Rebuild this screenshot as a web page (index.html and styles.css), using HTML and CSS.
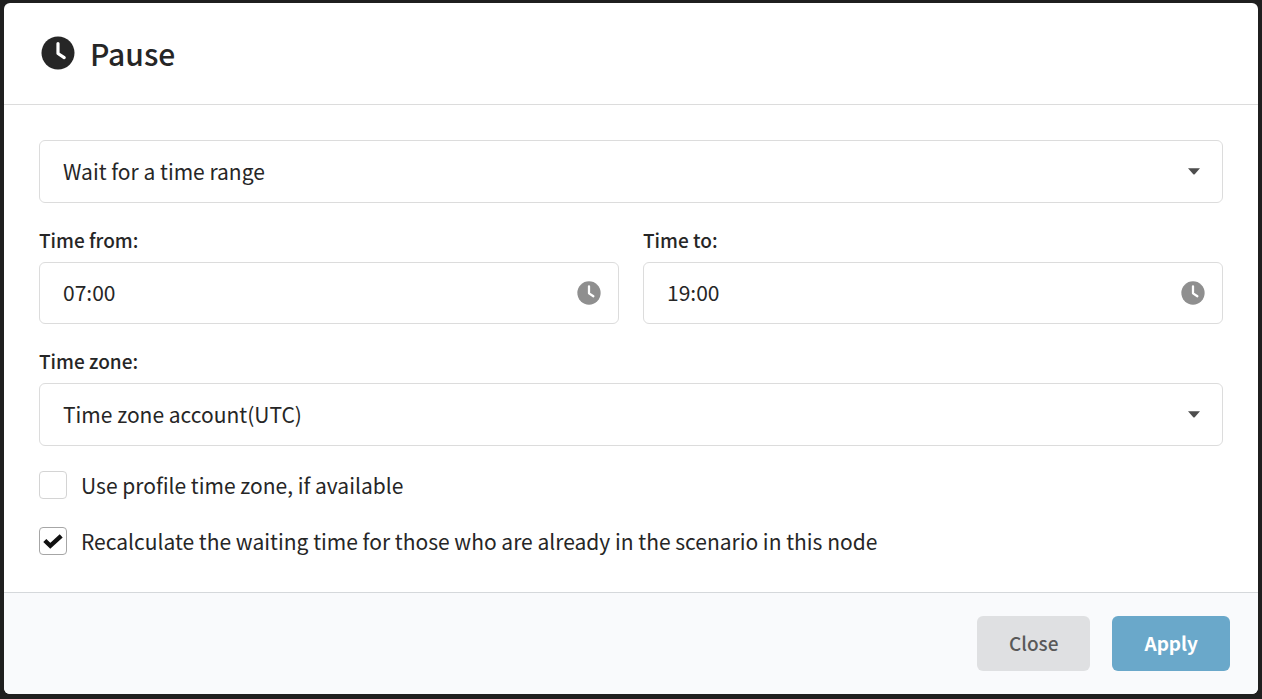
FILE: index.html
```html
<!DOCTYPE html>
<html lang="en">
<head>
<meta charset="utf-8">
<meta name="viewport" content="width=device-width, initial-scale=1">
<title>Pause</title>
<link rel="stylesheet" href="styles.css">
</head>
<body>
<svg class="sprite" aria-hidden="true">
  <symbol id="clock" viewBox="0 0 34 34">
    <circle cx="17" cy="17" r="16.5" fill="currentColor"/>
    <path d="M17 7.500V17.500L23.200 21.600" fill="none" stroke="#fff" stroke-width="3.200" stroke-linecap="round" stroke-linejoin="round"/>
  </symbol>
  <symbol id="caret" viewBox="0 0 12 7">
    <path d="M0 0.300H12L6.700 6.200Q6 6.900 5.300 6.200Z" fill="currentColor"/>
  </symbol>
</svg>
<form class="modal" role="dialog" aria-labelledby="title">
  <header class="modal-header">
    <svg class="title-icon" aria-hidden="true"><use href="#clock"/></svg>
    <h1 class="title" id="title">Pause</h1>
  </header>
  <main class="modal-body">
    <div class="control">
      <select class="input select" aria-label="Pause type"><option>Wait for a time range</option></select>
      <svg class="caret" aria-hidden="true"><use href="#caret"/></svg>
    </div>
    <div class="row">
      <div class="field">
        <label class="label" for="from">Time from:</label>
        <div class="control">
          <input class="input" id="from" type="text" value="07:00">
          <svg class="field-icon" aria-hidden="true"><use href="#clock"/></svg>
        </div>
      </div>
      <div class="field">
        <label class="label" for="to">Time to:</label>
        <div class="control">
          <input class="input" id="to" type="text" value="19:00">
          <svg class="field-icon" aria-hidden="true"><use href="#clock"/></svg>
        </div>
      </div>
    </div>
    <div class="field">
      <label class="label" for="zone">Time zone:</label>
      <div class="control">
        <select class="input select" id="zone"><option>Time zone account(UTC)</option></select>
        <svg class="caret" aria-hidden="true"><use href="#caret"/></svg>
      </div>
    </div>
    <div class="checks">
      <div class="check">
        <span class="box"><input class="checkbox" id="profile" type="checkbox"><svg class="tick" viewBox="0 0 20 16" aria-hidden="true"><path d="M1.800 7.500L7.300 12.800L18.200 2.800" fill="none" stroke="currentColor" stroke-width="4.400"/></svg></span>
        <label for="profile">Use profile time zone, if available</label>
      </div>
      <div class="check">
        <span class="box"><input class="checkbox" id="recalc" type="checkbox" checked><svg class="tick" viewBox="0 0 20 16" aria-hidden="true"><path d="M1.800 7.500L7.300 12.800L18.200 2.800" fill="none" stroke="currentColor" stroke-width="4.400"/></svg></span>
        <label for="recalc">Recalculate the waiting time for those who are already in the scenario in this node</label>
      </div>
    </div>
  </main>
  <footer class="modal-footer">
    <button class="button button-close" type="button">Close</button>
    <button class="button button-apply" type="button">Apply</button>
  </footer>
</form>
</body>
</html>
```
FILE: styles.css
```css
* { box-sizing: border-box; }
body {
  margin: 0;
  padding: 3px 4px 5px;
  min-height: 100vh;
  display: flex;
  background: #1f1f1f;
  color: #262626;
  font: 21px/28px "Noto Sans CJK SC", "Noto Sans", sans-serif;
}
.sprite { position: absolute; width: 0; height: 0; }
.modal {
  flex: 1;
  display: flex;
  flex-direction: column;
  background: #fff;
  border-radius: 6px;
  overflow: hidden;
}
.modal-header {
  display: flex;
  align-items: center;
  gap: 15px;
  padding: 28px 37px 29px;
  border-bottom: 1px solid #dcdcdc;
}
.title-icon { width: 34px; height: 34px; }
.title { margin: 0; font-size: 30px; line-height: 44px; font-weight: 500; }
.modal-body {
  flex: 1;
  display: flex;
  flex-direction: column;
  gap: 23px;
  padding: 35px 35px 36px;
}
.row { display: flex; gap: 24px; }
.field { flex: 1; }
.modal-body > .field { flex: none; }
.label { display: block; margin-bottom: 8px; font-size: 19px; font-weight: 500; }
.control { position: relative; }
.input {
  display: block;
  width: 100%;
  height: 62px;
  padding: 0 56px 2px 23px;
  border: 1px solid #dcdcdc;
  border-radius: 6px;
  background: #fff;
  color: inherit;
  font: inherit;
  appearance: none;
}
.select { height: 63px; }
.caret, .field-icon { position: absolute; top: 0; bottom: 0; margin: auto 0; pointer-events: none; }
.caret { right: 23px; width: 12px; height: 7px; color: #4d4d4d; }
.field-icon { right: 18px; width: 24px; height: 24px; color: #8f8f8f; }
.checks { display: flex; flex-direction: column; gap: 28px; padding-top: 2px; }
.check { display: flex; align-items: center; gap: 14px; }
.box { position: relative; width: 28px; height: 28px; }
.checkbox {
  display: block;
  width: 28px;
  height: 28px;
  margin: 0;
  border: 1px solid #d4d4d4;
  border-radius: 4px;
  background: #fff;
  appearance: none;
}
.checkbox:checked { border-color: #a6a6a6; }
.tick { display: none; position: absolute; inset: 0; width: 20px; height: 16px; margin: auto; color: #111; pointer-events: none; }
.checkbox:checked + .tick { display: block; }
.modal-footer {
  display: flex;
  justify-content: flex-end;
  gap: 22px;
  padding: 23px 28px;
  border-top: 1px solid #d5d8db;
  background: #f9fafc;
}
.button {
  height: 55px;
  padding: 0 32px 2px;
  border: 0;
  border-radius: 6px;
  font: 500 19px/28px "Noto Sans CJK SC", "Noto Sans", sans-serif;
}
.button-close { background: #dfe0e2; color: #595959; }
.button-apply { background: #6aa8ca; color: #fff; font-weight: 700; }
```
